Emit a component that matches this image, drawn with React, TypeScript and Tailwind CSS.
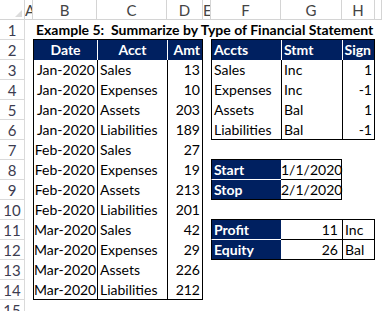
import React from "react";

type Col = "A" | "B" | "C" | "D" | "E" | "F" | "G" | "H" | "I";
type Spec = { t?: string; c?: string };
type RowSpec = Partial<Record<Col, Spec>>;

const COLS: Col[] = ["A", "B", "C", "D", "E", "F", "G", "H", "I"];
const NAVY = "bg-[#002060] text-white font-bold";
const TOP = "border-b border-black";

const sales = [
  ["Jan-2020", "Sales", "13"],
  ["Jan-2020", "Expenses", "10"],
  ["Jan-2020", "Assets", "203"],
  ["Jan-2020", "Liabilities", "189"],
  ["Feb-2020", "Sales", "27"],
  ["Feb-2020", "Expenses", "19"],
  ["Feb-2020", "Assets", "213"],
  ["Feb-2020", "Liabilities", "201"],
  ["Mar-2020", "Sales", "42"],
  ["Mar-2020", "Expenses", "29"],
  ["Mar-2020", "Assets", "226"],
  ["Mar-2020", "Liabilities", "212"],
];

const accts = [
  ["Sales", "Inc", "1"],
  ["Expenses", "Inc", "-1"],
  ["Assets", "Bal", "1"],
  ["Liabilities", "Bal", "-1"],
];

function buildRows(): RowSpec[] {
  const rows: RowSpec[] = [];
  rows[1] = {
    B: {
      t: "Example 5:  Summarize by Type of Financial Statement",
      c: `${TOP} font-bold whitespace-pre pl-[3px] overflow-visible`,
    },
    C: { c: TOP },
    D: { c: TOP },
    F: { c: TOP },
    G: { c: TOP },
    H: { c: TOP },
  };
  rows[2] = {
    B: { t: "Date", c: `${NAVY} text-center border-l border-black` },
    C: { t: "Acct", c: `${NAVY} text-center border-l border-white` },
    D: { t: "Amt", c: `${NAVY} text-right pr-[2px] border-l border-white border-r border-r-black` },
    F: { t: "Accts", c: `${NAVY} pl-[2px] border-l border-black` },
    G: { t: "Stmt", c: `${NAVY} pl-[2px] border-l border-white` },
    H: { t: "Sign", c: `${NAVY} text-right pr-[3px] border-l border-white border-r border-r-black` },
  };
  sales.forEach(([d, a, amt], i) => {
    const last = i === sales.length - 1 ? " border-b" : "";
    rows[i + 3] = {
      B: { t: d, c: `text-right pr-[2px] border-l border-black${last}` },
      C: { t: a, c: `pl-[2px] border-l border-black${last}` },
      D: { t: amt, c: `text-right pr-[2px] border-l border-r border-black${last}` },
    };
  });
  accts.forEach(([a, s, sign], i) => {
    const last = i === accts.length - 1 ? " border-b" : "";
    rows[i + 3].F = { t: a, c: `pl-[2px] border-l border-black${last}` };
    rows[i + 3].G = { t: s, c: `pl-[2px] border-l border-black${last}` };
    rows[i + 3].H = { t: sign, c: `text-right pr-[2px] border-l border-r border-black${last}` };
  });
  rows[7].F = { c: TOP };
  rows[7].G = { c: TOP };
  rows[8].F = { t: "Start", c: `${NAVY} pl-[2px] border-l border-black border-b border-b-white` };
  rows[8].G = { t: "1/1/2020", c: "text-right pr-[3px] border-r border-b border-black" };
  rows[9].F = { t: "Stop", c: `${NAVY} pl-[2px] border-l border-black border-b border-b-black` };
  rows[9].G = { t: "2/1/2020", c: "text-right pr-[3px] border-r border-b border-black" };
  rows[10].F = { c: TOP };
  rows[10].G = { c: TOP };
  rows[10].H = { c: TOP };
  rows[11] = {
    ...rows[11],
    F: { t: "Profit", c: `${NAVY} pl-[2px] border-l border-black border-b border-b-white` },
    G: { t: "11", c: "text-right pr-[4px] border-b border-black" },
    H: { t: "Inc", c: "pl-[2px] border-l border-r border-b border-black" },
  };
  rows[12] = {
    ...rows[12],
    F: { t: "Equity", c: `${NAVY} pl-[2px] border-l border-black border-b border-b-black` },
    G: { t: "26", c: "text-right pr-[4px] border-b border-black" },
    H: { t: "Bal", c: "pl-[2px] border-l border-r border-b border-black" },
  };
  rows[15] = {};
  return rows;
}

function Corner() {
  return (
    <div className="relative border-r border-b border-[#d4d4d4] bg-white">
      <svg className="absolute right-[2px] bottom-[2px]" width="7" height="7" viewBox="0 0 7 7">
        <polygon points="7,0 7,7 0,7" fill="#dcdcdc" />
      </svg>
    </div>
  );
}

export default function App() {
  const rows = buildRows();
  return (
    <div
      className="w-[382px] h-[311px] overflow-hidden bg-white text-black text-[14px] leading-[20px]"
      style={{ fontFamily: "Lato, 'Liberation Sans', sans-serif" }}
    >
      <div className="grid grid-cols-[25px_8px_64px_70px_36px_8px_70px_61px_33px_1fr] auto-rows-[20px]">
        <Corner />
        {COLS.map((c) => (
          <div
            key={c}
            className="overflow-hidden text-center text-[15px] text-[#444] border-r border-b border-[#d4d4d4]"
          >
            {c === "I" ? "" : c}
          </div>
        ))}
        {rows.slice(1).map((r, i) => (
          <React.Fragment key={i}>
            <div className="text-center text-[15px] text-[#3c3c50] border-r border-b border-[#dadada]">
              {i + 1}
            </div>
            {COLS.map((c) => (
              <div key={c} className={`whitespace-nowrap ${r[c]?.c ?? ""}`}>
                {r[c]?.t ?? ""}
              </div>
            ))}
          </React.Fragment>
        ))}
      </div>
    </div>
  );
}
